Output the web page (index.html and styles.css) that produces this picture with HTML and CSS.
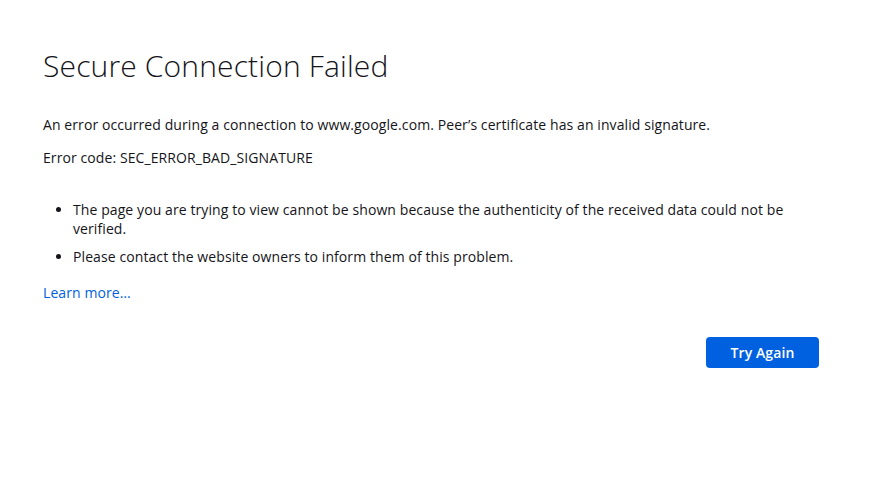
FILE: index.html
```html
<!DOCTYPE html>
<html>
<head>
<meta charset="utf-8">
<link rel="stylesheet" href="styles.css">
</head>
<body>
<div class="container">
  <h1 class="title">Secure Connection Failed</h1>
  <p class="desc">An error occurred during a connection to www.google.com. Peer’s certificate has an invalid signature.</p>
  <p class="code">Error code: SEC_ERROR_BAD_SIGNATURE</p>
  <ul class="list">
    <li>The page you are trying to view cannot be shown because the authenticity of the received data could not be verified.</li>
    <li>Please contact the website owners to inform them of this problem.</li>
  </ul>
  <a class="learn" href="#">Learn more…</a>
  <div class="actions">
    <button class="btn">Try Again</button>
  </div>
</div>
</body>
</html>
```
FILE: styles.css
```css
html, body {
  margin: 0;
  padding: 0;
  background: #ffffff;
}
body {
  font-family: "Open Sans", "Noto Sans", sans-serif;
  color: #15141a;
  font-size: 14px;
  letter-spacing: 0.09px;
}
.container {
  width: 776px;
  margin-left: 43px;
  padding-top: 46px;
}
.title {
  margin: 0 0 29px 0;
  font-size: 30px;
  font-weight: 300;
  line-height: 40px;
  letter-spacing: 0.15px;
}
.desc, .code {
  margin: 0 0 13px 0;
  line-height: 20px;
}
.list {
  margin: 32px 0 17px 0;
  padding-left: 30px;
}
.list li {
  line-height: 19px;
  margin-bottom: 9px;
}
.learn {
  display: block;
  color: #0061e0;
  text-decoration: none;
  line-height: 20px;
}
.actions {
  display: flex;
  justify-content: flex-end;
  margin-top: 34px;
}
.btn {
  background: #0061e0;
  color: #fff;
  border: none;
  border-radius: 4px;
  width: 113px;
  height: 31px;
  font-family: inherit;
  font-size: 14px;
  font-weight: 600;
  letter-spacing: 0.09px;
}
```
